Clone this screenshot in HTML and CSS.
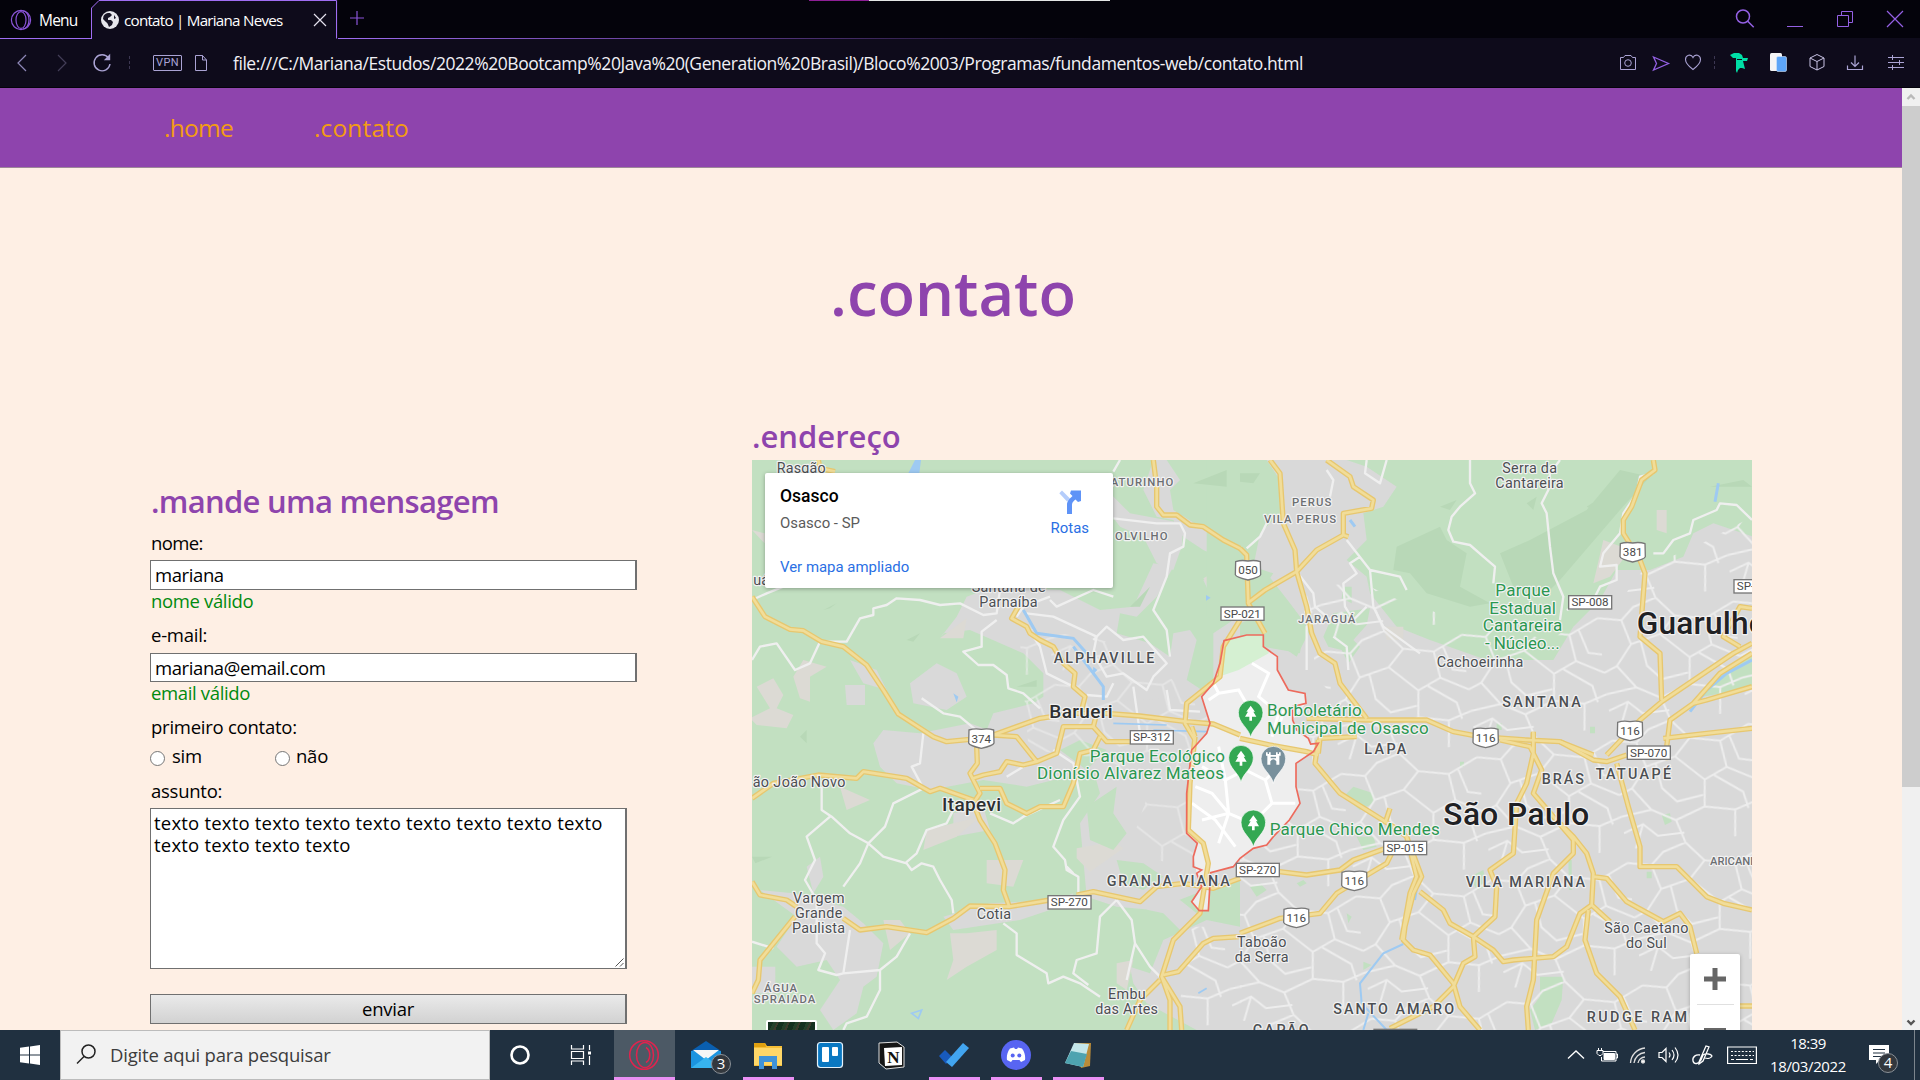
FILE: index.html
```html
<!DOCTYPE html>
<html lang="pt-BR">
<head>
<meta charset="utf-8">
<title>contato | Mariana Neves</title>
<link rel="stylesheet" href="styles.css">
</head>
<body>
<div class="screen">
  <header class="tabstrip">
    <div class="menu">
      <svg class="i24" viewBox="0 0 24 24" fill="none" stroke="#8b55d9" stroke-width="1.2"><circle cx="12" cy="12" r="9.6"/><ellipse cx="12" cy="12" rx="5" ry="8.4"/><path d="M14 3a6 9 0 0 1 0 18" /></svg>
      <span>Menu</span>
    </div>
    <div class="tab">
      <svg class="tab-edge" width="247" height="39" viewBox="0 0 247 39" fill="none"><path d="M0.5 39V8L8 .5H245.500V38.500" stroke="#9f6df2"/></svg>
      <svg class="globe" viewBox="0 0 18 18"><circle cx="9" cy="9" r="9" fill="#e6e6ec"/><path d="M2.500 5C4 2.500 6 2 9 2L11 4 9 6 7 7v2h3l2 2-1 3-3 2c-1-2-1-4-3-5L2 8zM13 4l2 3-2 1z" fill="#171425"/></svg>
      <span class="tab-title">contato | Mariana Neves</span>
      <svg class="tab-x" viewBox="0 0 14 14" stroke="#e4e1ee" stroke-width="1.2"><path d="M1 1l12 12M13 1L1 13"/></svg>
    </div>
    <svg class="plus" viewBox="0 0 16 16" stroke="#8b55d9" stroke-width="1.200"><path d="M8 1v14M1 8h14"/></svg>
    <div class="winctl">
      <svg class="i24" viewBox="0 0 24 24" fill="none" stroke="#9460e4" stroke-width="1.500"><circle cx="10" cy="9.500" r="6.500"/><path d="M14.700 14.200l6 6"/></svg>
      <svg class="i24" viewBox="0 0 24 24" fill="none" stroke="#9460e4"><path d="M4 19.500h16"/></svg>
      <svg class="i24" viewBox="0 0 24 24" fill="none" stroke="#9460e4"><path d="M4.500 8.500h11v11h-11zM8.500 8.500v-4h11v11h-4"/></svg>
      <svg class="i24" viewBox="0 0 24 24" fill="none" stroke="#9460e4" stroke-width="1.200"><path d="M4 4l16 16M20 4L4 20"/></svg>
    </div>
    <i class="load-bar"></i>
  </header>
  <div class="toolbar">
    <svg class="i24" viewBox="0 0 24 24" fill="none" stroke="#8e88b8" stroke-width="1.200"><path d="M15 4l-8 8 8 8"/></svg>
    <svg class="i24 fwd" viewBox="0 0 24 24" fill="none" stroke="#433e58" stroke-width="1.200"><path d="M8 4l8 8-8 8"/></svg>
    <svg class="i24 reload" viewBox="0 0 24 24" fill="none" stroke="#aaa3d4" stroke-width="1.400"><path d="M18.500 7A8 8 0 1 0 20 13"/><path d="M19.500 4.500V8.500H15.500z" fill="#aaa3d4"/></svg>
    <i class="dots d1"></i>
    <span class="vpn">VPN</span>
    <svg class="doc" viewBox="0 0 14 18" fill="none" stroke="#aaa3d4"><path d="M1.500 1.500h7l4 4.500v10.500h-11zM8.500 1.500V6h4"/></svg>
    <span class="url">file:///C:/Mariana/Estudos/2022%20Bootcamp%20Java%20(Generation%20Brasil)/Bloco%2003/Programas/fundamentos-web/contato.html</span>
    <div class="tools">
      <svg class="i24" viewBox="0 0 24 24" fill="none" stroke="#aaa3d4"><path d="M4.500 6.500h3l1.500-2h6l1.500 2h3v12h-15z"/><circle cx="12" cy="12" r="3.300"/></svg>
      <svg class="i24 t2" viewBox="0 0 24 24" fill="none" stroke="#9460e4" stroke-width="1.300"><path d="M4.500 6l15 6.500-15 6.500 3-6.500z"/></svg>
      <svg class="i24 t3" viewBox="0 0 24 24" fill="none" stroke="#aaa3d4" stroke-width="1.100"><path d="M12 18.500C8 15.500 4.500 12.500 4.500 8.500 4.500 4 10 2.500 12 6.500 14 2.500 19.500 4 19.500 8.500c0 4-3.500 7-7.500 10z"/></svg>
      <i class="dots t4"></i>
      <svg class="i24 t5" viewBox="0 0 24 24" fill="#00dfa6"><path d="M3 4l4-2 5 0 3 2 1 3h5l-1 3-4 0 1 4 1 4-3-1-2 0-2 2-1 3-1-2 0-5V9l0-2-3 0z"/><path d="M10 8h5v1h-5z" fill="#0e0b1b"/></svg>
      <svg class="i24 t6" viewBox="0 0 24 24"><rect x="4" y="2" width="12" height="18" rx="1.500" fill="#f5f5f5"/><rect x="10.500" y="5.500" width="10" height="15" rx="1.500" fill="#5ea6f8" stroke="#d5e5fa" stroke-width=".6"/></svg>
      <svg class="i24 t7" viewBox="0 0 24 24" fill="none" stroke="#c9c4e6"><path d="M12 3.500l7 3.500v8.500L12 19l-7-3.500V7zM5 7l7 3.500L19 7M12 10.500V19"/></svg>
      <svg class="i24 t8" viewBox="0 0 24 24" fill="none" stroke="#aaa3d4" stroke-width="1.200"><path d="M12 4.500v11M8 11.500l4 4 4-4M4.500 14.500v4h15v-4"/></svg>
      <svg class="i24 t9" viewBox="0 0 24 24" fill="none" stroke="#aaa3d4"><path d="M4 6.500h16M4 11.500h16M4 16.500h16M8.500 4v5M15.500 9v5M8.500 14v5"/></svg>
    </div>
  </div>

  <div class="viewport">
    <div class="page">
      <nav class="nav"><a class="home">.home</a><a>.contato</a></nav>
      <h1>.contato</h1>
      <main class="columns">
        <form class="form">
          <h2>.mande uma mensagem</h2>
          <label class="first">nome:</label>
          <div class="field">mariana</div>
          <p class="ok">nome válido</p>
          <label class="second">e-mail:</label>
          <div class="field mail">mariana@email.com</div>
          <p class="ok">email válido</p>
          <label class="second">primeiro contato:</label>
          <div class="radios"><i></i><span class="yes">sim</span><i></i><span>não</span></div>
          <label class="subject">assunto:</label>
          <div class="area">texto texto texto texto texto texto texto texto texto<br>texto texto texto texto
            <svg class="grip" viewBox="0 0 9 9" stroke="#555"><path d="M.5 8.500l8-8M5 8.500L8.500 5"/></svg>
          </div>
          <div class="send">enviar</div>
        </form>
        <section class="address">
          <h2>.endereço</h2>
          <div class="map">
            <svg class="map-canvas" viewBox="0 0 3000 1710" width="1000" height="570">
              <defs>
                <pattern id="streets" width="410" height="370" patternUnits="userSpaceOnUse" patternTransform="rotate(-7)">
                  <path class="st" d="M0 40L70 55 110 20 180 0M70 55L90 130 40 190 0 205M90 130L180 110 230 60 180 0M230 60L320 80 410 40M320 80L330 160 260 190 180 110M330 160L410 205M260 190L250 270 160 300 90 260 40 190M160 300L180 370M250 270L340 290 410 270M340 290L330 370M0 270L90 260M60 300L30 370M0 320L60 300 100 340 180 340M120 125L130 200 170 245 250 235M290 180L370 240 380 290M350 70L370 140 410 150"/>
                </pattern>
                <g id="shield"><path d="M-37-25Q-20-31 0-27 20-31 37-25L38 14Q36 22 0 30-36 22-38 14z" fill="#fff" stroke="#777" stroke-width="4"/></g>
                <g id="plate"><rect x="-64" y="-20" width="129" height="40" fill="#fff" stroke="#777" stroke-width="4"/></g>
                <g id="pin"><path d="M0 74C-6 45-37 32-37 0a37 37 0 0 1 74 0C37 32 6 45 0 74z" stroke="#fff" stroke-width="2"/></g>
                <path id="tree" fill="#fff" d="M0-25L13-7H8L17 8H4V20H-4V8H-17L-8-7H-13z"/>
                <clipPath id="osasco-clip"><path d="M1416 542L1484 525 1534 525 1534 560 1576 590 1576 630 1609 690 1659 700 1662 730 1622 780 1634 810 1669 835 1676 852 1699 850 1684 875 1632 910 1632 980 1644 1030 1612 1080 1564 1130 1544 1155 1504 1165 1464 1195 1444 1220 1376 1238 1369 1352 1342 1352 1319 1325 1349 1280 1334 1240 1324 1190 1336 1150 1304 1120 1304 1000 1319 870 1364 820 1374 790 1349 710 1384 670 1404 610z"/></clipPath>
                <g id="road-lines">
                  <path transform="translate(-36 -180)" d="M36 590L75 650 150 688 190 692 245 725 310 740 380 795 430 870 475 942 580 1010 620 1025 690 1018 760 1005 900 955 1000 940 1100 940 1200 948 1340 965 1420 972 1500 1005M1240 180L1250 260 1250 320 1270 345 1310 345 1350 375 1390 380 1450 420 1500 445M835 620L815 655 860 680 870 700 900 720 940 740 970 790 1005 820 1000 860 1035 890 1025 930M1500 660L1450 740 1440 830 1340 910 1335 970 1365 1020M235 180L240 205 285 215"/>
                  <path transform="translate(-36 720)" d="M1365 110L1350 250 1345 390 1390 430 1405 490 1380 640 1300 720 1265 830 1290 900 1290 990M1265 830L1320 920 1325 990M1260 840L1200 900 1160 990M1270 825L1315 815 1390 730 1420 715 1500 710M36 295L100 250 235 225 350 235 370 215 500 235 570 275 600 265 700 300M710 140L712 190 690 220 720 280 700 310 720 360 765 430 795 510 790 570 808 620M310 655L360 690 440 680 560 698 640 655 690 618 808 620 930 600M1010 585L1060 575 1200 605 1250 560 1330 550 1420 565 1500 535M36 545L60 585 140 600 170 620M165 650L60 780 55 840 36 880M700 235L730 225 780 215 800 185 850 195 890 185 950 160 970 80 1060 80 1100 125 1170 125M760 105L830 110 890 185M720 265L780 265 800 310 860 340 900 320 970 320 1000 250 1020 160 1060 150 1080 110M1060 80L1070 40M1365 110L1355 80"/>
                  <path transform="translate(1464 -60)" d="M90 60L120 100 130 250 165 330 170 395 200 500 215 580 240 640 285 670 300 730 380 835M260 60L330 110 340 140 400 180 395 205 310 220 310 285 325 290M0 325L20 345 22 410 25 490 75 580M22 490L75 450 170 395 230 330 310 285M1240 60L1245 90 1205 120 1175 200 1150 240 1150 280 1200 360 1215 400 1200 590 1260 640 1265 780M1536 610L1480 640 1265 785 1200 840 1100 945M1536 640L1440 700 1360 790 1290 840 1275 960M1536 740L1400 780 1360 790M200 835L380 840 560 840 640 875 720 890 860 900 960 905 1060 945M350 890L240 895 235 940M1536 865L1400 880 1270 895M1536 505L1500 500 1450 590 1500 620M880 875L880 900M0 895L100 917 200 935 235 945"/>
                  <path transform="translate(1464 780)" d="M235 60L225 130 300 220 380 270 460 320 500 350 545 470 520 520 495 620 490 660 520 690 570 705 640 790 660 860 720 930M450 265L435 310M500 350L530 470 510 520 485 660M540 515L610 570 630 610 700 650 760 690 790 725 820 720 940 710 980 680 1020 580 1055 555 1060 460 1040 400 1000 350 960 310M880 40L880 100 860 190 830 250 820 400 750 450 770 500 765 590 700 650 705 710 670 730 640 800 580 860 450 925M880 100L905 150 880 220 1000 360 1000 400 940 460 890 600 880 780 860 860 865 930M780 60L870 80 880 100M1060 470L1100 475 1160 545 1270 605 1320 580 1350 620 1370 700M1055 555L1110 605M1045 570L1035 660 1070 760 1140 830 1185 930M1130 130L1165 260 1200 380 1200 440 1310 440 1400 530 1450 550 1536 570M960 65L1060 120 1100 125 1160 105M1500 858L1536 858M118 455L200 465 300 450 340 420 450 380M0 640L120 595 240 580 290 520 440 430 460 390"/>
                </g>
              </defs>
              <rect width="3000" height="1710" fill="#c2e0c1"/>
              <g fill="#d9d9d9">
                <path transform="translate(-36 -180)" d="M1240 180h40l40 60-30 30 10 60 80 50 120 60v60l-110-50-60-40-30-50-50-10-40-80zM1110 280l60 60 160 30-5 70-25 70-50-20-40-80-70-30-30-40zM600 715l50-65 30-60 80-30 200 10 120 60 100-10 60-130 60 10-50 90-60 60-50-10-10 60 100 30 60 40 10-70 50-10 20 30-30 120 60 40 80-130 90-30v320H720l40-100 120-30 30-20V820l-60-60-160-70-80 10zM510 850l80-60 60 30 30 70-60 40-100-20zM315 855h60v60h-55zM330 780l80 30 30 60-70-20zM1390 540l110-40v130l-60 20z"/>
                <path transform="translate(-36 720)" d="M540 100l150-30 80 30 140-80 590-40v560l-80 20-180 70-110-10-90-30-20-220 60-90-20-70-80 20-120 30-130-20-160 30-100-20-50-50-20-70 30-40zM640 340l90-20 20 70-110 20zM60 570l100 10 150 40 60 50 60 60-20 100-40 30-20 80-70 50-40-60 60-90-40-60-90 20-60-60 60-90zM36 800h70v80H36zM610 650l140-40 200-10 50-20-10 30-150 50-200 30zM1180 620l140-20 50 40-40 60-60-60zM1170 800l60 20 40-100 130-60 100 20v310h-130l-150-80-40-60zM200 500l40-30 10 60-30 50z"/>
                <path transform="translate(1464 -60)" d="M-60 60h380l60 20 90 60-40 60-60 20 10 80-60 60 60 50 10 50 80 100 100 40 170 60 200 0 60-100 80-80 50-90 100 0 100-40 30-70 60-30 120 40v740H-80V580l60-40 80 10 10 30 100 70 40-80-60-80-70-90-130 0z"/>
                <rect x="1464" y="780" width="1536" height="930"/>
              </g>
              <g fill="#dcdad4">
                <path transform="translate(-36 -180)" d="M36 390l38 10v30zM160 830l30-50 70 20-50 30v75l-30-10zM50 860l50-25 30 50-20 40 50 20-20 40-90-10-20-20 60-30zM600 715l80-60-10 60zM1390 535l110-60v100l-60 40z"/>
                <path transform="translate(-36 720)" d="M560 390l80-20 80-20-70 60-100 40zM1010 445l110-20 30 20-100 70-40-40zM740 480l110 0-30 80-80-10zM630 700l50 0 90-10v60l-90 50-60 40 20-60zM430 660h50l30 40-60 50zM300 260l90 40-70 30zM1130 790l50-10-20 90-30-20zM1040 370l80-60-10 70z"/>
                <path transform="translate(1464 -60)" d="M1250 210l30 0v70l-30-10zM1090 300l80 30-60 80-50 20zM430 560l60 0 0 40-50 0z"/>
              </g>
              <g fill="#c2e0c1">
                <path transform="translate(1464 -60)" d="M-100 60H80l40 60 0 100-60 60-20 100 60 20-60 90-90 60-50-20zM0 550l60-20 130 30-10 80-110-20-30-30-40 0zM250 590l30-70 110-15-10 50-40 45 20 20-35 50-20-40-40-10zM350 330l15 0 0 30-10 20zM310 440h25v50l-30-15zM1430 700l106-60v100l-90 20-60 10zM770 850h15v20h-15zM1050 860h15v20h-15z"/>
                <path transform="translate(1464 780)" d="M310 230l30-30 60 20 0 30-40 20zM350 350l50 0 10 30-40 10zM900 770h70l-5 70-30 70-50 20-15-60 30-40zM30 500l30-10 20 20-30 20zM170 490l20-10 10 10-20 10zM320 580l15 10-10 20zM370 725l25 10-25 15zM690 470l40-20 10 50-30 10zM1265 285l25-5 5 25-20 10zM985 420h10v90h-8zM1220 455h15v20h-15zM660 125l12 0v15h-12z"/>
                <path transform="translate(-36 720)" d="M960 150l60-30 80 30-60 60zM1040 320l90-60-10 80 40 60-40 50-70-30zM1130 480l80 10 60 40-60 40-60-20z"/>
              </g>
              <g fill="#b8d8b7">
                <path transform="translate(1464 -60)" d="M470 320l130-60 20 40 60 40-20 100 90 50-60 10-130-40-50-60-50-10zM780 340l90-40 170-90 100-120 90 20-90 100-180 210-40 40-100-20zM0 100h60l-20 30-40-5zM1040 200l30-20-10 30zM860 190l30-20-10 40zM600 200l50-20-20 30zM1410 140l100-20 26 20z"/>
                <path transform="translate(-36 -180)" d="M1360 250l100-40v50zM250 630l40-20-20 15zM500 720l40-20-20 25zM1170 620l60-60-30 60zM830 860l60-20v20z"/>
                <path transform="translate(-36 720)" d="M36 470l60 0-50 20zM180 110l20-20v40z"/>
              </g>
              <rect x="1464" y="780" width="1536" height="930" fill="url(#streets)"/>
              <path fill="url(#streets)" d="M1830 370l110 50 210 70 250 50 110-90 90-20 80-110 150-60 170-90v610H1810l-110-120-60-280z"/>
              <path fill="url(#streets)" opacity=".6" d="M800 500l250 40 170 80 210 200v160l-120 250-180-60 70-200-190-80-180-20z"/>
              <path fill="url(#streets)" d="M1320 1400h150v310h-200z"/>
              <g class="local">
                <path transform="translate(-36 -180)" d="M36 600L80 580 130 560M36 780L60 740 110 730 165 810 210 790 240 725 320 725 360 655 400 645 400 625 440 615 470 595 540 600 600 615 660 610 730 645 770 640 780 570M770 660L725 695 725 740 670 755 715 795 760 795 800 825 805 865 850 880 900 925M545 895L610 940 660 950 720 1000M880 710L900 740 920 820 1000 860M930 600L950 620 1060 570 1120 590M860 640L940 650 1070 710 1060 760 1100 830 1150 820 1220 870 1240 830 1280 790 1210 710 1150 720 1100 680 1060 720M1140 180L1120 215M1120 355L1250 370 1320 370 1335 400 1330 440 1290 460 1280 530 1240 630 1280 690 1290 770M1180 860L1200 1000M1280 870L1290 930 1380 935M1040 885L1100 890 1120 850M830 650L850 620 930 590"/>
                <path transform="translate(-36 720)" d="M245 260L245 330 275 350 330 400 385 430 430 470 500 490 515 510 545 490 580 500 600 540 635 600 640 640M270 350L200 410 225 480 195 540 230 600 230 730 255 760 235 810 290 825 310 820 330 690M550 265L460 310 435 380 385 430 360 490 310 560M495 490L530 460 560 390 620 370 640 330M550 100L540 190 515 200 550 265M510 700L470 770 420 810 420 870 380 950 320 970 310 990M310 820L420 810M790 670L830 700 830 765 920 820 925 850 970 830 1020 850 1080 890M1130 600L1080 650 1070 760 1010 780 1000 820 1045 855M1130 600L1175 660 1185 730 1160 840M1185 730L1230 800 1260 830M940 150L1000 190 1020 290 970 360 940 440 975 480 980 510 1015 530 1015 580M750 340L820 370 850 350 960 300M800 230L850 200 900 180M36 725L100 745M980 500L1000 520"/>
                <path transform="translate(1464 -60)" d="M690 60L690 130 705 160 660 200 635 230 625 270 640 305 690 315 730 350 765 380 760 430M960 60L930 100 925 150 905 190 920 220 930 320 940 400 970 470 960 540M1240 100L1200 110 1190 160 1150 220 1140 280 1090 340 1080 380 1130 375 1130 420 1080 440 1060 480 980 510M1240 340L1270 340 1300 300 1350 280 1360 240 1430 210 1440 190 1490 195 1536 240M380 60L375 100 420 130 440 60M270 170L280 120 260 90M80 250L60 290 20 325M170 395L220 460 225 500 260 530 200 560 200 690M320 300L390 390 400 500 430 560 540 640M360 350L330 370 350 400 310 430 315 500 340 540 380 500M390 390L480 410 500 450M280 590L320 620 325 690M40 670L110 690"/>
              </g>
              <g fill="none" stroke="#9ecaf2" stroke-width="9">
                <path transform="translate(-36 -180)" d="M850 630L890 700 1000 715 1040 760M1000 740L1090 860 1090 900"/>
                <path transform="translate(-36 -180)" fill="#9ecaf2" stroke="none" d="M505 220l20-40h18l-5 40zM1060 800l12 10-14 14zM640 880l15 10-5 17zM1398 585l14 8-14 9z"/>
                <path transform="translate(-36 720)" stroke-width="5" d="M1120 70L1280 75M1240 90L1400 95 1440 130 1500 142M515 940l30-10-10 25zM1375 880l25-15"/>
                <path transform="translate(1464 780)" stroke-width="6" d="M530 510L525 540M490 672L430 700 360 790 365 850 440 930M385 880L370 930"/>
                <path transform="translate(1464 -60)" d="M1350 815L1400 750 1460 700 1536 660M330 240l15 20M1435 130l-10 55"/>
              </g>
              <g clip-path="url(#osasco-clip)">
                <rect x="1280" y="500" width="440" height="870" fill="#eee"/>
                <path d="M1400 520h150v60l-90 50-60 20z" fill="#d5f0d2"/>
                <path fill="none" stroke="#fff" stroke-width="9" d="M1500 610L1550 640 1520 710 1580 760 1560 830M1400 700L1460 690 1500 760M1350 920L1420 960 1480 930 1540 960 1560 1030 1500 1090 1430 1060 1350 1080M1420 960L1430 1060 1400 1150M1320 1030L1390 1080 1450 1160M1540 960L1600 900M1560 1030L1630 1030M1400 860L1420 960M1330 980L1380 1000 1430 1060M1370 720L1400 700 1380 660M1600 740L1580 800 1620 820"/>
              </g>
              <use href="#road-lines" class="road-edge"/>
              <use href="#road-lines" class="road-inner"/>
              <path d="M1416 542L1484 525 1534 525 1534 560 1576 590 1576 630 1609 690 1659 700 1662 730 1622 740 1622 780 1634 810 1669 835 1676 852 1699 850 1684 875 1632 910 1632 980 1644 1030 1612 1080 1564 1130 1544 1155 1504 1165 1464 1195 1444 1220 1376 1238 1369 1352 1342 1352 1319 1325 1349 1280 1334 1240 1349 1230 1324 1220 1324 1190 1336 1150 1304 1120 1304 1000 1319 870 1364 820 1374 790 1349 710 1384 670 1404 610z" fill="none" stroke="#ed6a5c" stroke-width="5"/>
              <g class="lbl" transform="translate(-36 -180)">
                <text x="110" y="220" textLength="147">Rasgão</text><text x="40" y="556">uá</text>
                <text class="sm" x="1112" y="257" textLength="188">ATURINHO</text><text class="sm" x="1125" y="420" textLength="158">OLVILHO</text>
                <text x="695" y="575" textLength="222">Santana de</text><text x="718" y="620" textLength="175">Parnaíba</text>
                <text class="cap" x="941" y="789" textLength="302">ALPHAVILLE</text><text class="city" x="928" y="954" textLength="190">Barueri</text>
              </g>
              <g class="lbl" transform="translate(-36 720)">
                <text x="38" y="261" textLength="278">ão João Novo</text><text class="city" x="606" y="333" textLength="177">Itapevi</text>
                <text class="cap" x="1100" y="557" textLength="369">GRANJA VIANA</text><text x="710" y="656" textLength="103">Cotia</text>
                <text x="159" y="609" textLength="155">Vargem</text><text x="165" y="653" textLength="142">Grande</text><text x="156" y="699" textLength="159">Paulista</text>
                <text class="sm" x="72" y="877" textLength="99">ÁGUA</text><text class="sm" x="41" y="910" textLength="185">SPRAIADA</text>
                <text x="1104" y="898" textLength="113">Embu</text><text x="1066" y="942" textLength="188">das Artes</text>
                <text class="park" x="1049" y="185" textLength="406">Parque Ecológico</text><text class="park" x="891" y="237" textLength="561">Dionísio Alvarez Mateos</text>
                <use href="#shield" x="724" y="115"/><text class="no" x="724" y="128">374</text>
                <use href="#plate" x="1235" y="112"/><text class="no" x="1235" y="124">SP-312</text>
                <use href="#plate" x="988" y="607"/><text class="no" x="988" y="619">SP-270</text>
              </g>
              <g class="lbl" transform="translate(1464 -60)">
                <text x="787" y="98" textLength="164">Serra da</text><text x="766" y="144" textLength="205">Cantareira</text>
                <text class="sm" x="156" y="199" textLength="118">PERUS</text><text class="sm" x="72" y="249" textLength="216">VILA PERUS</text>
                <text class="sm" x="174" y="549" textLength="172">JARAGUÁ</text>
                <text class="park" x="766" y="468" textLength="164">Parque</text><text class="park" x="748" y="521" textLength="200">Estadual</text><text class="park" x="728" y="573" textLength="239">Cantareira</text><text class="park" x="735" y="626" textLength="224">- Núcleo...</text>
                <text x="590" y="681" textLength="260">Cachoeirinha</text><text class="cap" x="787" y="801" textLength="235">SANTANA</text>
                <text class="park" x="81" y="829" textLength="284">Borboletário</text><text class="park" x="81" y="881" textLength="485">Municipal de Osasco</text>
                <text class="cap" x="373" y="942" textLength="126">LAPA</text><text class="big" x="1190" y="583" textLength="440">Guarulhos</text>
                <use href="#shield" x="24" y="390"/><text class="no" x="24" y="403">050</text>
                <use href="#plate" x="7" y="521"/><text class="no" x="7" y="533">SP-021</text>
                <use href="#plate" x="1050" y="487"/><text class="no" x="1050" y="499">SP-008</text>
                <use href="#plate" x="1546" y="439"/><text class="no" x="1546" y="451">SP-019</text>
                <use href="#shield" x="1178" y="336"/><text class="no" x="1178" y="349">381</text>
                <use href="#shield" x="737" y="893"/><text class="no" x="737" y="906">116</text>
                <use href="#shield" x="1170" y="872"/><text class="no" x="1170" y="885">116</text>
                <use href="#plate" x="1226" y="938"/><text class="no" x="1226" y="951">SP-070</text>
              </g>
              <g class="lbl" transform="translate(1464 780)">
                <text class="cap" x="905" y="192" textLength="127">BRÁS</text><text class="cap" x="1067" y="177" textLength="226">TATUAPÉ</text>
                <text class="big" x="610" y="316" textLength="438">São Paulo</text><text class="cap" x="677" y="501" textLength="358">VILA MARIANA</text>
                <text class="sm" x="1410" y="436" textLength="208">ARICANDUVA</text><text class="park" x="89" y="345" textLength="510">Parque Chico Mendes</text>
                <text x="1093" y="638" textLength="252">São Caetano</text><text x="1158" y="683" textLength="122">do Sul</text>
                <text x="-9" y="681" textLength="148">Taboão</text><text x="-16" y="727" textLength="162">da Serra</text>
                <text class="cap" x="280" y="881" textLength="362">SANTO AMARO</text><text class="cap" x="38" y="945" textLength="168">CAPÃO</text><text class="cap" x="1040" y="905" textLength="372">RUDGE RAMOS</text>
                <use href="#plate" x="495" y="384"/><text class="no" x="495" y="396">SP-015</text>
                <use href="#plate" x="53" y="450"/><text class="no" x="53" y="462">SP-270</text>
                <use href="#shield" x="343" y="482"/><text class="no" x="343" y="495">116</text>
                <use href="#shield" x="169" y="593"/><text class="no" x="169" y="606">116</text>
                <rect x="400" y="926" width="132" height="8" fill="#777"/>
              </g>
              <g fill="#34a853">
                <use href="#pin" x="1496" y="758"/><use href="#tree" x="1496" y="762"/>
                <use href="#pin" x="1467" y="893"/><use href="#tree" x="1467" y="897"/>
                <use href="#pin" x="1504" y="1087"/><use href="#tree" x="1504" y="1091"/>
                <use href="#pin" x="1564" y="896" fill="#78909c"/>
                <path fill="#fff" d="M1542 877h5v5h4v-5h5v8h16v-8h5v5h4v-5h5v10h-4v27h-9v-10q-9-12-18 0v10h-9v-27h-4zM1556 890v5h16v-5z"/>
              </g>
            </svg>
            <div class="place">
              <div class="place-text"><b>Osasco</b><span>Osasco - SP</span><a>Ver mapa ampliado</a></div>
              <div class="route">
                <svg viewBox="0 0 22 24" width="22" height="24"><path d="M3 .5L.3 3.200 8 11.500 11 8.500z" fill="#b5cdfb"/><path d="M8 24v-9c0-4 2-5.500 5.500-9L11 3.500 12 .5H22V11l-3 1-2.500-2.500C13.500 12 13 13 13 16v8z" fill="#5f93f7"/></svg>
                <a>Rotas</a>
              </div>
            </div>
            <div class="sat"></div>
            <div class="zoomer"><svg viewBox="0 0 22 22" width="22" height="22"><path d="M8.500 0h5v8.500H22v5h-8.500V22h-5v-8.500H0v-5h8.500z" fill="#666"/></svg><i></i><b></b></div>
          </div>
        </section>
      </main>
    </div>
    <aside class="scrollbar">
      <svg viewBox="0 0 18 18" fill="none" stroke="#b9b9b9" stroke-width="2.400"><path d="M5.500 11L9 7.500 12.500 11"/></svg>
      <i></i>
      <svg class="down" viewBox="0 0 18 18" fill="none" stroke="#555" stroke-width="2.400"><path d="M5.500 7.500L9 11l3.500-3.500"/></svg>
    </aside>
  </div>

  <footer class="taskbar">
    <div class="start"><svg viewBox="0 0 20 20" width="20" height="20" fill="#fff"><path d="M0 2.800l9-1.300V9.500H0zM10 1.400L20 0v9.500H10zM0 10.500h9v8L0 17.200zM10 10.500h10V20l-10-1.400z"/></svg></div>
    <div class="search"><svg viewBox="0 0 22 22" width="22" height="22" fill="none" stroke="#222" stroke-width="1.500"><circle cx="13.500" cy="8.500" r="6.500"/><path d="M9 13.500L2 20.500"/></svg><span>Digite aqui para pesquisar</span></div>
    <div class="apps">
      <div class="app"><svg viewBox="0 0 32 32"><circle cx="16" cy="16" r="8.500" fill="none" stroke="#fff" stroke-width="2.600"/></svg></div>
      <div class="app"><svg viewBox="0 0 32 32" fill="none" stroke="#fff" stroke-width="1.200"><path d="M5.500 6v4h12V6M5.500 26v-4h12v4M5.500 12.500h12v7h-12zM23.500 6v5M23.500 17v9"/><path d="M22 12.500h3v3h-3z" fill="#fff" stroke="none"/></svg></div>
      <div class="app active"><svg viewBox="0 0 32 32" fill="none" stroke="#e0234e" stroke-width="1.500"><circle cx="16" cy="16" r="14.300"/><ellipse cx="17" cy="16" rx="8.500" ry="12.500"/><path d="M18 8.500c5 3 5 12 0 15" /></svg></div>
      <div class="app"><svg viewBox="0 0 32 32"><path d="M1 12L16 2l15 10z" fill="#0a5fb0"/><path d="M1 12h30v17H1z" fill="#1b94e0"/><path d="M3 11h26L16 21z" fill="#f6f6f6"/><path d="M1 29l15-11 15 11z" fill="#37b4f0"/></svg><em>3</em></div>
      <div class="app open"><svg viewBox="0 0 32 32"><path d="M2 4h11l2 3h15v20H2z" fill="#f7bf35"/><path d="M2 9h28v17H2z" fill="#ffd768"/><path d="M2 4h11l1 4H2z" fill="#e0a010"/><path d="M7 30V17h18v13h-5v-7h-8v7z" fill="#3f93d8"/></svg></div>
      <div class="app"><svg viewBox="0 0 32 32"><rect x="3.500" y="3.500" width="25" height="25" rx="3" fill="#0a78c2" stroke="#e5f2fb" stroke-width="1.200"/><rect x="8" y="8" width="7" height="15" rx="1" fill="#fff"/><rect x="18" y="8" width="6" height="9" rx="1" fill="#fff"/></svg></div>
      <div class="app"><svg viewBox="0 0 32 32"><path d="M3 4l18-1 7 5v20l-18 2-7-6z" fill="#151515" stroke="#ddd"/><path d="M8 9l18-1v18L9 27z" fill="#fff"/><text x="17.500" y="24" class="notion">N</text></svg></div>
      <div class="app open"><svg viewBox="0 0 32 32"><path d="M1 17l6-6 7 7-6 7z" fill="#185abd"/><path d="M8 23L25 4l6 5-17 19z" fill="#42a5f0"/></svg></div>
      <div class="app open"><svg viewBox="0 0 32 32"><circle cx="16" cy="16" r="15" fill="#5865f2"/><path d="M10 9.500l4-1 1 1.500h2l1-1.500 4 1c3 4 3.500 8 3 11.500l-4 2-1.500-2h-7l-1.500 2-4-2c-.5-3.500 0-7.500 3-11.500z" fill="#fff"/><circle cx="12.700" cy="16.500" r="2" fill="#5865f2"/><circle cx="19.300" cy="16.500" r="2" fill="#5865f2"/></svg></div>
      <div class="app open"><svg viewBox="0 0 32 32"><path d="M13 4l16 0-1 23-9 2z" fill="#b98b39"/><path d="M12 4l15 1-6 23L3 24z" fill="#c3e6ea"/><path d="M9 12l16 3-4 13L3 24z" fill="#4ea3b0"/></svg></div>
    </div>
    <div class="tray">
      <svg class="chev" viewBox="0 0 24 24" fill="none" stroke="#fff" stroke-width="1.300"><path d="M4 15.500L12 8l8 7.500"/></svg>
      <svg viewBox="0 0 24 24" fill="none" stroke="#fff"><path d="M8 8.500h13v9.500H6.500v-4M21 11h1.500v4H21"/><path d="M9 10.500h10.500v6H9z" fill="#fff"/><path d="M2 7.500h6v3l-2 2H4l-2-2zM3.500 5v2M6.500 5v2"/></svg>
      <svg viewBox="0 0 24 24" fill="none" stroke="#ddd" stroke-width="1.300"><path d="M4.500 20A16 16 0 0 1 19 5M8 20A12 12 0 0 1 19 9.500M12 20a7 7 0 0 1 7-6"/><circle cx="17" cy="18.500" r="1.500" fill="#fff"/></svg>
      <svg viewBox="0 0 24 24" fill="none" stroke="#fff" stroke-width="1.200"><path d="M2 9.500h3l4-4v13l-4-4H2zM12 9.500q2 2.500 0 5M15 7q4 5 0 10M18 4.500q6 7.500 0 15"/></svg>
      <svg class="pen" viewBox="0 0 24 24" fill="none" stroke="#fff" stroke-width="1.300"><path d="M9 19L16 3l3 1-6 14-4 3zM10 12c-4-1-8 2-7 6 1 4 6 3 8-1l2-5c3-2 8-1 9 1-1 2-4 3-7 2"/></svg>
      <svg class="kbd" viewBox="0 0 30 24" fill="none" stroke="#fff" stroke-width="1.200"><path d="M.600 4h28.800v16.500H.600z"/><path d="M4 8.500h23M4 12.500h23" stroke-dasharray="2 1.600"/><path d="M4 16.500h3M9 16.500h12M23 16.500h3"/></svg>
      <div class="clock"><span>18:39</span><span class="date">18/03/2022</span></div>
      <div class="note"><svg viewBox="0 0 20 20" width="20" height="20"><path d="M0 0h20v15h-9l-4 4v-4H0z" fill="#fff"/><path d="M4 4.500h12M4 8h12M4 11.500h8" stroke="#203040" stroke-width="1.200"/></svg><em>4</em></div>
      <i class="peek"></i>
    </div>
  </footer>
</div>
</body>
</html>
```
FILE: styles.css
```css
* { box-sizing: border-box; }
body { margin: 0; overflow: hidden; font-family: "Open Sans", "Noto Sans", sans-serif; }
svg { display: block; flex: none; }
i { display: block; flex: none; }
.screen { width: 1920px; height: 1080px; display: flex; flex-direction: column; }
.i24 { width: 24px; height: 24px; }

/* browser tab strip */
.tabstrip { position: relative; flex: none; height: 39px; display: flex; background: #04030b; color: #fff; }
.menu { width: 91px; height: 39px; display: flex; align-items: center; padding-left: 9px; gap: 6px; font-size: 15.500px; border-bottom: 1px solid #9f6df2; letter-spacing: -0.8px; padding-top: 1px; }
.tab { position: relative; width: 247px; height: 39px; display: flex; align-items: center; padding-left: 10px; background: linear-gradient(135deg, #04030b 5px, #0e0b1b 6px); }
.tab-edge { position: absolute; left: 0; top: 0; }
.globe { width: 18px; height: 18px; }
.tab-title { width: 194px; padding-left: 5px; font-size: 15.200px; letter-spacing: -0.760px; white-space: nowrap; }
.tab-x { width: 14px; height: 14px; }
.plus { width: 16px; height: 16px; margin: 10px 0 0 11px; }
.tabstrip::after { content: ""; position: absolute; left: 338px; top: 38px; width: 760px; height: 1px; background: linear-gradient(90deg, #9f6df2, #6b439f 40%, transparent); }
.tabstrip::before { content: ""; position: absolute; left: 338px; right: 0; top: 38px; height: 1px; background: #0e0b1b; }
.load-bar { position: absolute; left: 809px; top: 0; width: 301px; height: 1px; background: linear-gradient(90deg, #8e1f96 60px, #e4e6e6 60px); }
.winctl { margin-left: auto; display: flex; gap: 26px; padding: 7px 13px 0 0; }

/* address bar */
.toolbar { flex: none; height: 49px; display: flex; align-items: center; padding: 0 12px 1px 11px; background: #0e0b1b; border-bottom: 1px solid #04030b; }
.fwd { margin-left: 15px; }
.reload { margin-left: 16px; }
.dots { width: 1px; height: 14px; background: repeating-linear-gradient(180deg, #3c3752 0 3px, transparent 3px 5px); }
.d1 { margin-left: 15px; }
.vpn { margin-left: 23px; width: 29px; height: 16px; border: 1px solid #aaa3d4; border-radius: 1px; color: #aaa3d4; font: 11px/14px Roboto, sans-serif; letter-spacing: .4px; text-align: center; }
.doc { margin-left: 12px; width: 14px; height: 18px; }
.url { margin-left: 25px; color: #f1f0f5; font-size: 17.500px; letter-spacing: -0.450px; white-space: nowrap; }
.tools { margin-left: auto; display: flex; align-items: center; }
.t2 { margin-left: 9px; }
.t3 { margin-left: 8px; }
.t4 { margin-left: 9px; }
.t5 { margin-left: 12px; }
.t6, .t7 { margin-left: 15px; }
.t8 { margin-left: 14px; }
.t9 { margin-left: 17px; }

/* page */
.viewport { flex: none; height: 942px; display: flex; }
.page { width: 1902px; height: 942px; overflow: hidden; background: #feefe4; }
.nav { height: 80px; display: flex; padding: 20px 0 0 164px; background: #8e44ad; border-bottom: 1px solid #9d8798; color: #f39c12; font-size: 24.500px; line-height: 40px; letter-spacing: .150px; }
.nav a { width: 150px; }
.nav .home { letter-spacing: -0.700px; }
h1 { margin: 86px 0 0; padding-left: 4px; height: 206px; text-align: center; color: #8e44ad; font-size: 61.500px; line-height: 76px; font-weight: 600; letter-spacing: 0; }
h2 { margin: 0; color: #8e44ad; font-size: 31px; line-height: 40px; font-weight: 600; }
.columns { display: flex; padding-left: 150px; margin-top: -66px; }
.form { width: 602px; padding-top: 87px; font-size: 18.500px; letter-spacing: -0.250px; }
.form h2 { padding-left: 1px; height: 40px; letter-spacing: -0.700px; }
label { display: block; line-height: 24px; padding-left: 1px; }
label.first { margin-top: 10px; height: 29px; letter-spacing: -0.600px; }
.field { width: 487px; height: 30px; padding-left: 4px; line-height: 27px; letter-spacing: -0.400px; border: 1px solid #707070; border-right-width: 2px; background: #fff; }
.mail { height: 29px; }
.ok { margin: 0; height: 22px; line-height: 22px; padding-left: 1px; color: #008a0e; letter-spacing: -0.350px; }
label.second { margin-top: 11px; height: 30px; }
.radios { display: flex; height: 19px; margin-top: 4px; line-height: 14px; }
.radios i { width: 15px; height: 15px; margin-top: 2px; border: 1.500px solid #767676; border-radius: 50%; background: #fff; }
.radios span { padding-left: 6px; }
.radios .yes { width: 110px; padding-left: 7px; }
label.subject { margin-top: 11px; height: 29px; }
.area { position: relative; width: 477px; height: 161px; padding: 3px; line-height: 22px; letter-spacing: .200px; border: 1px solid #707070; border-right-width: 2px; background: #fff; }
.grip { position: absolute; right: 1px; bottom: 1px; width: 9px; height: 9px; }
.send { margin-top: 25px; width: 477px; height: 30px; line-height: 27px; text-align: center; border: 1px solid #707070; border-right-width: 2px; background: linear-gradient(#eaeaea, #d2d2d2); }
.address { width: 1000px; }
.address h2 { height: 44px; margin-top: 22px; }

/* embedded map */
.map { position: relative; width: 1000px; height: 570px; overflow: hidden; font-family: Roboto, sans-serif; }
.st { fill: none; stroke: #ededed; stroke-width: 6px; }
.local path { fill: none; stroke: #efefef; stroke-width: 7px; stroke-linejoin: round; }
.road-edge { fill: none; stroke: #e7c76f; stroke-width: 16px; stroke-linejoin: round; }
.road-inner { fill: none; stroke: #f1dd99; stroke-width: 8px; stroke-linejoin: round; }
.lbl text { font-family: Roboto, sans-serif; font-size: 43px; fill: #4c4f52; stroke: #f2f2f2; stroke-width: 7px; stroke-linejoin: round; paint-order: stroke; }
.lbl .sm { font-size: 34px; font-weight: 500; fill: #6c6f72; }
.lbl .cap { font-size: 43px; font-weight: 500; }
.lbl .city { font-size: 57px; font-weight: 500; fill: #2d2f31; }
.lbl .big { font-size: 95px; font-weight: 500; fill: #1f2124; }
.lbl .park { font-size: 51px; fill: #2b9750; }
.lbl .no { font-size: 35px; fill: #4a4a4a; text-anchor: middle; stroke: none; }
.place { position: absolute; left: 13px; top: 13px; width: 348px; height: 115px; padding: 12px 24px 0 15px; display: flex; justify-content: space-between; background: #fff; border-radius: 2px; box-shadow: 0 1px 4px rgba(0, 0, 0, .3); }
.place-text { display: flex; flex-direction: column; font-size: 14.950px; line-height: 20px; color: #5b5b5b; }
.place-text b { font-size: 17.500px; font-weight: 500; line-height: 22px; color: #000; }
.place-text span { margin-top: 6px; }
.place a { color: #2a6fe4; }
.place-text a { margin-top: 24px; }
.route { display: flex; flex-direction: column; align-items: center; padding-top: 5px; font-size: 14.950px; line-height: 20px; }
.route a { margin-top: 4px; }
.sat { position: absolute; left: 14px; top: 560px; width: 51px; height: 20px; border: 2px solid #fff; border-radius: 2px; background: repeating-linear-gradient(115deg, #14301f 0 5px, #24402a 5px 8px, #3c3a2c 8px 10px); }
.zoomer { position: absolute; left: 938px; top: 494px; width: 50px; height: 90px; padding-top: 14px; display: flex; flex-direction: column; align-items: center; background: #fff; border-radius: 2px; box-shadow: 0 1px 4px rgba(0, 0, 0, .25); }
.zoomer i { width: 37px; height: 1px; margin: 14px 0 23px; background: #e0e0e0; }
.zoomer b { width: 22px; height: 5px; background: #666; }

.scrollbar { width: 18px; display: flex; flex-direction: column; background: #f0f0f0; }
.scrollbar svg { width: 18px; height: 18px; }
.scrollbar i { height: 681px; background: #cdcdcd; }
.scrollbar .down { margin-top: auto; margin-bottom: -1px; }

/* taskbar */
.taskbar { flex: none; height: 50px; display: flex; background: #203040; color: #fff; }
.start { width: 60px; display: flex; align-items: center; justify-content: center; }
.search { width: 430px; display: flex; align-items: center; gap: 13px; padding: 0 0 2px 14px; background: #f2f2f2; border: 1px solid #bcbcbc; color: #3c3c3c; font-size: 18.500px; letter-spacing: -0.200px; }
.apps { display: flex; margin-left: -1px; }
.app { position: relative; width: 62px; display: flex; justify-content: center; padding-top: 9px; }
.app svg { width: 32px; height: 32px; }
.active { background: linear-gradient(#4c5965, #4c5965) 1px 0 / 61px 50px no-repeat; }
.active::after, .open::after { content: ""; position: absolute; left: 6px; bottom: 0; width: 51px; height: 3px; background: #ea90f4; }
.active::after { left: 1px; width: 61px; }
em { position: absolute; width: 20px; height: 20px; border: 1px solid #8a9097; border-radius: 50%; background: #33383e; font-size: 15px; font-style: normal; line-height: 17px; text-align: center; }
.app em { left: 36px; top: 24px; }
.notion { font: bold 17px "Liberation Serif", serif; text-anchor: middle; fill: #111; }
.tray { margin-left: auto; display: flex; align-items: center; }
.tray > svg { width: 24px; height: 24px; margin-right: 7px; }
.tray > svg.pen { margin-left: 2px; margin-right: 13px; }
.tray > svg.kbd { width: 30px; margin-right: 8px; }
.clock { width: 86px; display: flex; flex-direction: column; align-items: center; font-size: 15px; line-height: 23px; letter-spacing: -0.550px; padding-bottom: 1px; }
.clock .date { letter-spacing: -0.350px; }
.note { position: relative; width: 63px; padding-left: 18px; }
.note em { left: 27px; top: 8px; }
.peek { width: 1px; height: 50px; margin-right: 5px; background: #7c858d; }
```
